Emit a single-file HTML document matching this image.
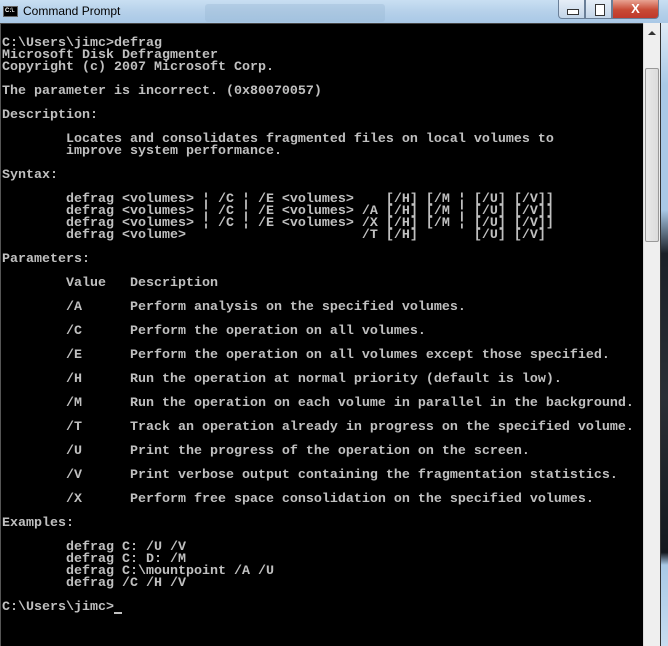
<!DOCTYPE html>
<html><head><meta charset="utf-8"><style>
*{margin:0;padding:0;box-sizing:border-box}
html,body{width:668px;height:646px;overflow:hidden;background:#000}
#title{position:absolute;left:0;top:0;width:668px;height:23px;background:linear-gradient(to bottom,#c9dff2 0%,#b6d1ea 50%,#a9c8e6 100%)}
#ghost{position:absolute;left:205px;top:4px;width:180px;height:18px;background:rgba(150,180,210,.35);border-radius:3px}
#icon{position:absolute;left:3px;top:6px;width:15px;height:11px;background:#000;border:1px solid #666;color:#fff;font:bold 6px "Liberation Sans",sans-serif;line-height:9px;padding-left:1px}
#ttext{position:absolute;left:23px;top:4px;font:12px "Liberation Sans",sans-serif;color:#000}
.btn{position:absolute;top:0;height:19px;border:1px solid #6a7f98;border-top:none;background:linear-gradient(#e6eef7,#c3d5e8)}
#min{left:558px;width:27px;border-radius:0 0 0 4px}
#min:after{content:"";position:absolute;left:8px;top:9px;width:10px;height:4px;border:1px solid #333;background:#fff}
#max{left:585px;width:27px}
#max:after{content:"";position:absolute;left:9px;top:4px;width:8px;height:10px;border:1px solid #333;background:#fff}
#close{left:612px;width:47px;background:linear-gradient(#e8a493,#c84a35 55%,#c0392b);border-radius:0 0 4px 0;color:#fff;font:bold 13px "Liberation Sans",sans-serif;text-align:center;line-height:18px}
#con{position:absolute;left:0;top:23px;width:643px;height:623px;background:#000;border-left:1px solid #555;border-top:1px solid #444}
#sb{position:absolute;left:643px;top:23px;width:17px;height:623px;background:#efefef;border-left:1px solid #ddd}
#thumb{position:absolute;left:645px;top:68px;width:14px;height:174px;background:linear-gradient(to right,#e8e8e8,#dcdcdc);border:1px solid #999;border-radius:2px}
#arrow{position:absolute;left:648px;top:31px;width:0;height:0;border-left:4px solid transparent;border-right:4px solid transparent;border-bottom:4px solid #333}
#rf{position:absolute;left:660px;top:23px;width:8px;height:623px;background:linear-gradient(#dfeaf5 0,#a9c9e6 10%,#a9c9e6 30%,#1c2028 37%,#2a2f36 60%,#14181e 85%,#a9c9e6 87%,#c8dcef 100%);border-left:1px solid #333}
pre{position:absolute;left:2px;top:38px;font-family:"Liberation Mono",monospace;font-size:13.33px;line-height:12px;color:#c0c0c0;font-weight:bold;letter-spacing:0}
.cur{display:inline-block;width:8px;height:2px;background:#c0c0c0;vertical-align:bottom}
</style></head><body>
<div id="title"><div id="ghost"></div><div id="icon">C:\.</div><div id="ttext">Command Prompt</div>
<div class="btn" id="min"></div><div class="btn" id="max"></div><div class="btn" id="close">X</div></div>
<div id="con"></div>
<div id="sb"></div><div id="arrow"></div><div id="thumb"></div><div id="rf"></div>
<pre>C:\Users\jimc&gt;defrag
Microsoft Disk Defragmenter
Copyright (c) 2007 Microsoft Corp.

The parameter is incorrect. (0x80070057)

Description:

        Locates and consolidates fragmented files on local volumes to
        improve system performance.

Syntax:

        defrag &lt;volumes&gt; ¦ /C ¦ /E &lt;volumes&gt;    [/H] [/M ¦ [/U] [/V]]
        defrag &lt;volumes&gt; ¦ /C ¦ /E &lt;volumes&gt; /A [/H] [/M ¦ [/U] [/V]]
        defrag &lt;volumes&gt; ¦ /C ¦ /E &lt;volumes&gt; /X [/H] [/M ¦ [/U] [/V]]
        defrag &lt;volume&gt;                      /T [/H]       [/U] [/V]

Parameters:

        Value   Description

        /A      Perform analysis on the specified volumes.

        /C      Perform the operation on all volumes.

        /E      Perform the operation on all volumes except those specified.

        /H      Run the operation at normal priority (default is low).

        /M      Run the operation on each volume in parallel in the background.

        /T      Track an operation already in progress on the specified volume.

        /U      Print the progress of the operation on the screen.

        /V      Print verbose output containing the fragmentation statistics.

        /X      Perform free space consolidation on the specified volumes.

Examples:

        defrag C: /U /V
        defrag C: D: /M
        defrag C:\mountpoint /A /U
        defrag /C /H /V

C:\Users\jimc&gt;<span class="cur"></span></pre>
</body></html>
